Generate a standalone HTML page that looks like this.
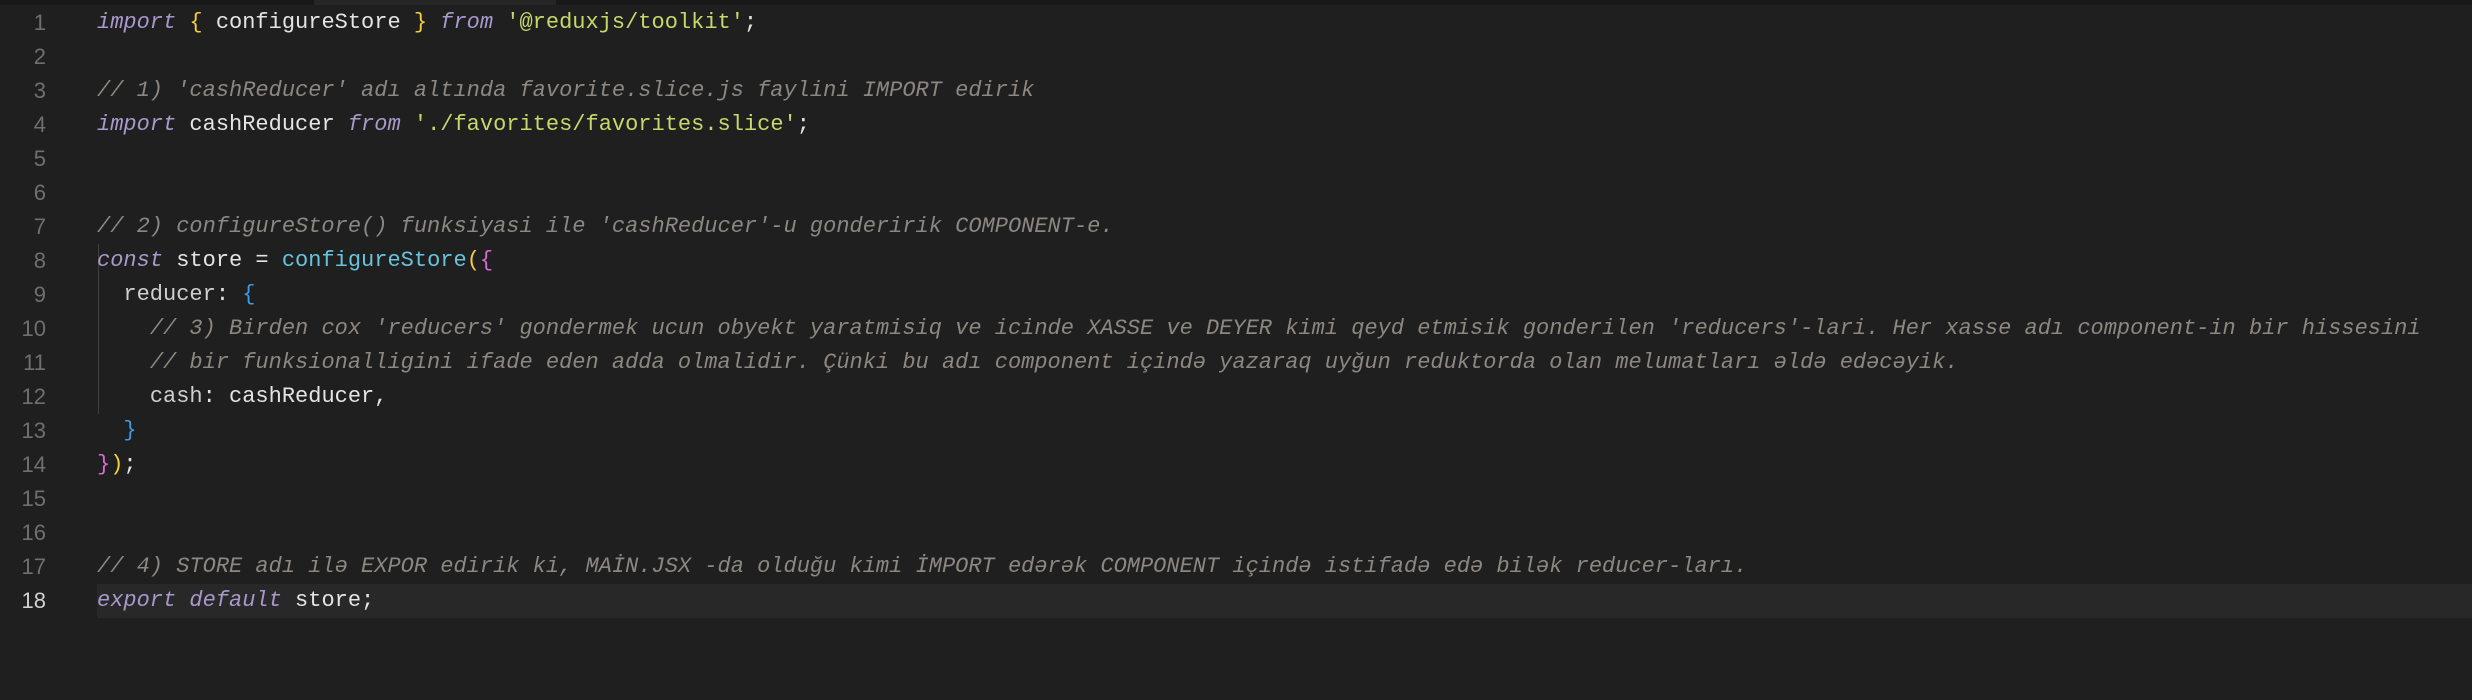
<!DOCTYPE html>
<html><head><meta charset="utf-8"><style>
html,body{margin:0;padding:0;background:#1f1f1f;width:2472px;height:700px;overflow:hidden}
.top{position:absolute;left:0;top:0;width:2472px;height:5px;background:#181818}
.top i{position:absolute;left:314px;width:242px;top:0;height:5px;background:#262626}
.ln{position:absolute;left:0;width:46px;text-align:right;color:#6e7070;font:22px/34px "Liberation Sans",sans-serif}
.code{position:absolute;left:97px;top:6px;font:22px/34px "Liberation Mono","DejaVu Sans Mono",monospace;color:#e4e4e4;white-space:pre}
.hl{position:absolute;left:97px;top:584px;width:2375px;height:34px;background:#282828}
.guide{position:absolute;left:98px;top:244px;width:1px;height:170px;background:#404040}
.k{color:#a898cc;font-style:italic}.c{color:#8c8781;font-style:italic}.s{color:#c8d76a}
.y{color:#f5cf3a}.p{color:#d46cd4}.b{color:#3d9ae6}.f{color:#66c4dc}.pr{color:#cfcfcf}
</style></head><body>
<div class="top"><i></i></div>
<div class="hl"></div><div class="guide"></div>
<div class="ln" style="top:6px">1<br>2<br>3<br>4<br>5<br>6<br>7<br>8<br>9<br>10<br>11<br>12<br>13<br>14<br>15<br>16<br>17<br><span style="color:#d0d0d0">18</span></div>
<div class="code"><span class="k">import</span> <span class="y">{</span> configureStore <span class="y">}</span> <span class="k">from</span> <span class="s">'@reduxjs/toolkit'</span>;

<span class="c">// 1) 'cashReducer' adı altında favorite.slice.js faylini IMPORT edirik</span>
<span class="k">import</span> cashReducer <span class="k">from</span> <span class="s">'./favorites/favorites.slice'</span>;


<span class="c">// 2) configureStore() funksiyasi ile 'cashReducer'-u gonderirik COMPONENT-e.</span>
<span class="k">const</span> store = <span class="f">configureStore</span><span class="y">(</span><span class="p">{</span>
  <span class="pr">reducer</span>: <span class="b">{</span>
    <span class="c">// 3) Birden cox 'reducers' gondermek ucun obyekt yaratmisiq ve icinde XASSE ve DEYER kimi qeyd etmisik gonderilen 'reducers'-lari. Her xasse adı component-in bir hissesini</span>
    <span class="c">// bir funksionalligini ifade eden adda olmalidir. Çünki bu adı component içində yazaraq uyğun reduktorda olan melumatları əldə edəcəyik.</span>
    <span class="pr">cash</span>: cashReducer,
  <span class="b">}</span>
<span class="p">}</span><span class="y">)</span>;


<span class="c">// 4) STORE adı ilə EXPOR edirik ki, MAİN.JSX -da olduğu kimi İMPORT edərək COMPONENT içində istifadə edə bilək reducer-ları.</span>
<span class="k">export</span> <span class="k">default</span> store;</div>
</body></html>
